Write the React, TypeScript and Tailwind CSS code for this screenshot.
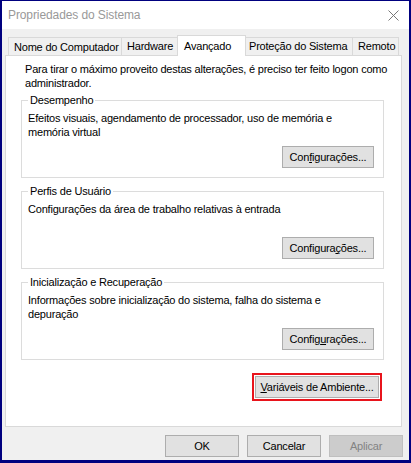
import React from "react";

function Btn({ children, className = "", disabled = false }: { children: React.ReactNode; className?: string; disabled?: boolean }) {
  return (
    <div
      className={
        "h-[22px] flex items-center justify-center border " +
        (disabled
          ? "bg-[#cccccc] border-[#bfbfbf] text-[#838383] "
          : "bg-[#e1e1e1] border-[#adadad] text-black ") +
        className
      }
    >
      {children}
    </div>
  );
}

function Group({ title, lines, btn }: { title: string; lines: string[]; btn: React.ReactNode }) {
  return (
    <div className="relative ml-[15px] mr-[17px] h-[78px] border border-[#dcdcdc] flex flex-col pl-[6px] pr-[9px] pt-[10px] pb-[9px]">
      <span className="absolute left-[6px] top-[-8px] bg-white px-[2px] leading-[14px]">{title}</span>
      <div className="leading-[14px]">
        {lines.map((l, i) => (
          <div key={i} className="whitespace-nowrap">{l}</div>
        ))}
      </div>
      <div className="mt-auto flex justify-end">
        <Btn className="w-[92px]">{btn}</Btn>
      </div>
    </div>
  );
}

export default function App() {
  return (
    <div className="w-[411px] h-[463px] bg-[#00007f] pl-[2px] pr-[2px] pt-[1px] pb-[3px] font-['Liberation_Sans',Arial,sans-serif] text-[11px] tracking-[-0.2px] text-black">
      <div className="h-full flex flex-col bg-[#f0f0f0]">
        {/* title bar */}
        <div className="h-[28px] bg-white flex items-center justify-between pl-[6px] pr-[10px] shrink-0">
          <span className="text-[12px] text-[#999999] tracking-[-0.1px]">Propriedades do Sistema</span>
          <svg width="11" height="11" viewBox="0 0 11 11" className="mt-[1px]">
            <path d="M0.5 0.5 L10.5 10.5 M10.5 0.5 L0.5 10.5" stroke="#777777" strokeWidth="1" />
          </svg>
        </div>
        {/* tabs */}
        <div className="mt-[6px] h-[20px] flex items-end pl-[6px] shrink-0">
          <div className="w-[114px] h-[18px] border border-b-0 border-[#d9d9d9] flex items-center pl-[5px] leading-[14px]">Nome do Computador</div>
          <div className="-ml-px w-[58px] h-[18px] border border-b-0 border-[#d9d9d9] flex items-center pl-[5px]">Hardware</div>
          <div className="relative z-10 -ml-[2px] -mr-[2px] w-[69px] h-[21px] -mb-px bg-white border border-b-0 border-[#d9d9d9] flex items-start pt-[2px] pl-[6px]">Avançado</div>
          <div className="-ml-px w-[110px] h-[18px] border border-b-0 border-[#d9d9d9] flex items-center pl-[5px]">Proteção do Sistema</div>
          <div className="-ml-px w-[47px] h-[18px] border border-b-0 border-[#d9d9d9] flex items-center pl-[5px]">Remoto</div>
        </div>
        {/* panel */}
        <div className="ml-[3px] mr-[7px] h-[372px] bg-white border border-[#d9d9d9] flex flex-col shrink-0">
          <div className="pl-[19px] pt-[6px] leading-[14px]">
            <div className="whitespace-nowrap">Para tirar o máximo proveito destas alterações, é preciso ter feito logon como</div>
            <div>administrador.</div>
          </div>
          <div className="mt-[10px]">
            <Group
              title="Desempenho"
              lines={["Efeitos visuais, agendamento de processador, uso de memória e", "memória virtual"]}
              btn={<span>Con<u className="underline-offset-1">f</u>igurações...</span>}
            />
          </div>
          <div className="mt-[13px]">
            <Group
              title="Perfis de Usuário"
              lines={["Configurações da área de trabalho relativas à entrada"]}
              btn={<span>Configura<u className="underline-offset-1">ç</u>ões...</span>}
            />
          </div>
          <div className="mt-[13px]">
            <Group
              title="Inicialização e Recuperação"
              lines={["Informações sobre inicialização do sistema, falha do sistema e", "depuração"]}
              btn={<span>Config<u className="underline-offset-1">u</u>rações...</span>}
            />
          </div>
          <div className="mt-[13px] mr-[19px] flex justify-end">
            <div className="border-2 border-[#e8141c] p-px">
              <Btn className="w-[124px] h-[21px]">
                <span><u className="underline-offset-1">V</u>ariáveis de Ambiente...</span>
              </Btn>
            </div>
          </div>
        </div>
        {/* bottom buttons */}
        <div className="mt-[8px] flex justify-end gap-[8px] pr-[6px] shrink-0">
          <Btn className="w-[74px]">OK</Btn>
          <Btn className="w-[74px]">Cancelar</Btn>
          <Btn className="w-[74px]" disabled>Aplicar</Btn>
        </div>
      </div>
    </div>
  );
}
